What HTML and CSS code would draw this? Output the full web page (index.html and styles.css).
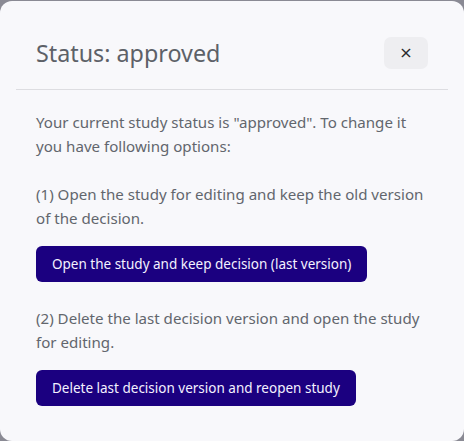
FILE: index.html
```html
<!DOCTYPE html>
<html>
<head>
<meta charset="utf-8">
<link rel="stylesheet" href="styles.css">
</head>
<body>
<div class="modal">
  <div class="modal-header">
    <h2 class="modal-title">Status: approved</h2>
    <button class="close-btn" type="button">×</button>
  </div>
  <div class="modal-body">
    <p>Your current study status is "approved". To change it you have following options:</p>
    <p>(1) Open the study for editing and keep the old version of the decision.</p>
    <button class="action-btn" type="button">Open the study and keep decision (last version)</button>
    <p>(2) Delete the last decision version and open the study for editing.</p>
    <button class="action-btn" type="button">Delete last decision version and reopen study</button>
  </div>
</div>
</body>
</html>
```
FILE: styles.css
```css
html, body {
  margin: 0;
  padding: 0;
  height: 100%;
}
body {
  background: #8a8a94;
  font-family: "Noto Sans", "Open Sans", sans-serif;
  padding-top: 1px;
  box-sizing: border-box;
  overflow: hidden;
}
.modal {
  background: #f8f8fb;
  border-radius: 12px;
  height: 440px;
}
.modal-header {
  margin: 0 16px;
  padding: 36px 20px 20px 20px;
  border-bottom: 1px solid #dddde1;
  display: flex;
  align-items: center;
  justify-content: space-between;
}
.modal-title {
  margin: 0;
  font-size: 23.3px;
  font-weight: 400;
  color: #5d6168;
  line-height: 32px;
}
.close-btn {
  width: 44px;
  height: 32px;
  border: none;
  border-radius: 7px;
  background: #eeeef1;
  color: #2a2a2e;
  font-size: 16px;
  font-family: "DejaVu Sans", sans-serif;
  padding: 0;
  line-height: 32px;
  cursor: pointer;
}
.modal-body {
  padding: 20px 36px;
  display: flex;
  flex-direction: column;
  align-items: flex-start;
}
.modal-body p {
  margin: 0 0 24px 0;
  font-size: 15.1px;
  line-height: 24px;
  color: #62666d;
}
.modal-body p + .action-btn {
  margin-top: -8px;
}
.action-btn {
  background: #1b0080;
  color: #f4f2ff;
  border: none;
  border-radius: 6px;
  height: 36px;
  padding: 0 16px;
  font-family: "Noto Sans", "Open Sans", sans-serif;
  font-size: 13.5px;
  margin-bottom: 24px;
  cursor: pointer;
}
```
